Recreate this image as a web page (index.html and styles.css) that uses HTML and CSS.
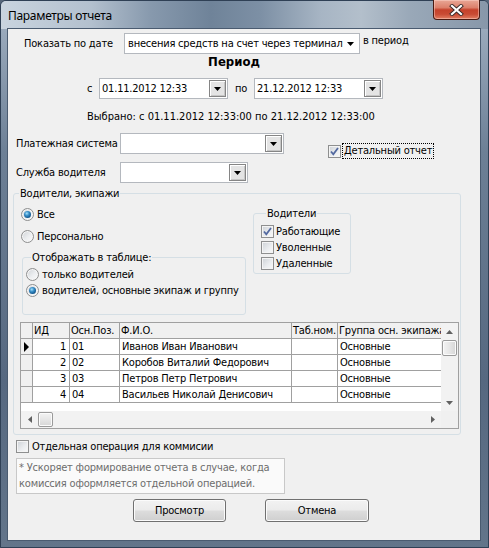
FILE: index.html
```html
<!DOCTYPE html>
<html lang="ru">
<head>
<meta charset="utf-8">
<title>Параметры отчета</title>
<link rel="stylesheet" href="styles.css">
</head>
<body>
<div class="window">
  <div class="titlebar">
    <span class="title">Параметры отчета</span>
    <div class="close-btn">
      <svg width="15" height="12" viewBox="0 0 15 12"><path d="M3 2 L12 10 M12 2 L3 10" stroke="#3a2a28" stroke-width="4" stroke-linecap="square"/><path d="M3 2 L12 10 M12 2 L3 10" stroke="#ffffff" stroke-width="2.2" stroke-linecap="square"/></svg>
    </div>
  </div>
  <div class="client">
    <div class="row r-show">
      <span class="lbl l-show">Показать по дате</span>
      <div class="combo c-show">
        <span class="ctext">внесения средств на счет через терминал</span>
        <svg class="tri" width="7" height="4" viewBox="0 0 7 4"><polygon points="0,0 7,0 3.5,4" fill="#000"/></svg>
      </div>
      <span class="lbl l-inperiod">в период</span>
    </div>
    <div class="period">Период</div>
    <div class="row r-dates">
      <span class="lbl l-from">с</span>
      <div class="field picker">
        <span class="ftext">01.11.2012 12:33</span>
        <span class="dbtn"><svg width="7" height="4" viewBox="0 0 7 4"><polygon points="0,0 7,0 3.5,4" fill="#000"/></svg></span>
      </div>
      <span class="lbl l-to">по</span>
      <div class="field picker">
        <span class="ftext">21.12.2012 12:33</span>
        <span class="dbtn"><svg width="7" height="4" viewBox="0 0 7 4"><polygon points="0,0 7,0 3.5,4" fill="#000"/></svg></span>
      </div>
    </div>
    <div class="selected">Выбрано: с 01.11.2012 12:33:00 по 21.12.2012 12:33:00</div>
    <div class="row r-pay">
      <span class="lbl l-field">Платежная система</span>
      <div class="field c-pay">
        <span class="dbtn"><svg width="7" height="4" viewBox="0 0 7 4"><polygon points="0,0 7,0 3.5,4" fill="#000"/></svg></span>
      </div>
      <div class="chk c-detail">
        <span class="box"><svg width="11" height="11" viewBox="0 0 11 11"><path d="M2 5.5 L4.3 8.3 L9 2" fill="none" stroke="#5369a0" stroke-width="1.8"/></svg></span>
        <span class="focus">Детальный отчет</span>
      </div>
    </div>
    <div class="row r-service">
      <span class="lbl l-field">Служба водителя</span>
      <div class="field c-service">
        <span class="dbtn"><svg width="7" height="4" viewBox="0 0 7 4"><polygon points="0,0 7,0 3.5,4" fill="#000"/></svg></span>
      </div>
    </div>
    <fieldset class="group g-main">
      <legend>Водители, экипажи</legend>
      <div class="g-top">
        <div class="g-left">
          <div class="opt"><span class="radio on"></span><span class="otext">Все</span></div>
          <div class="opt o-pers"><span class="radio"></span><span class="otext">Персонально</span></div>
          <fieldset class="group g-show">
            <legend>Отображать в таблице:</legend>
            <div class="opt"><span class="radio"></span><span class="otext">только водителей</span></div>
            <div class="opt o-next"><span class="radio on"></span><span class="otext">водителей, основные экипаж и группу</span></div>
          </fieldset>
        </div>
        <fieldset class="group g-drv">
          <legend>Водители</legend>
          <div class="opt"><span class="box"><svg width="11" height="11" viewBox="0 0 11 11"><path d="M2 5.5 L4.3 8.3 L9 2" fill="none" stroke="#5369a0" stroke-width="1.8"/></svg></span><span class="ctext2">Работающие</span></div>
          <div class="opt o-next"><span class="box"></span><span class="ctext2">Уволенные</span></div>
          <div class="opt o-next"><span class="box"></span><span class="ctext2">Удаленные</span></div>
        </fieldset>
      </div>
      <div class="grid">
        <div class="grid-body">
          <table class="tbl">
            <colgroup>
              <col class="w-ind"><col class="w-id"><col class="w-pos"><col class="w-fio"><col class="w-tab"><col class="w-grp">
            </colgroup>
            <thead>
              <tr><th class="ind"></th><th>ИД</th><th>Осн.Поз.</th><th>Ф.И.О.</th><th>Таб.ном.</th><th>Группа осн. экипажа</th></tr>
            </thead>
            <tbody>
              <tr><td class="ind"><span class="cur"></span></td><td class="num">1</td><td>01</td><td>Иванов Иван Иванович</td><td></td><td>Основные</td></tr>
              <tr><td class="ind"></td><td class="num">2</td><td>02</td><td>Коробов Виталий Федорович</td><td></td><td>Основные</td></tr>
              <tr><td class="ind"></td><td class="num">3</td><td>03</td><td>Петров Петр Петрович</td><td></td><td>Основные</td></tr>
              <tr><td class="ind"></td><td class="num">4</td><td>04</td><td>Васильев Николай Денисович</td><td></td><td>Основные</td></tr>
            </tbody>
          </table>
        </div>
        <div class="vscroll">
          <span class="sarrow"><svg width="7" height="4" viewBox="0 0 7 4"><polygon points="0,4 7,4 3.5,0" fill="#606060"/></svg></span>
          <span class="vthumb"></span>
          <span class="vspace"></span>
          <span class="sarrow"><svg width="7" height="4" viewBox="0 0 7 4"><polygon points="0,0 7,0 3.5,4" fill="#606060"/></svg></span>
        </div>
        <div class="hscroll">
          <span class="sarrow h"><svg width="4" height="7" viewBox="0 0 4 7"><polygon points="4,0 4,7 0,3.5" fill="#606060"/></svg></span>
          <span class="hthumb"></span>
          <span class="hspace"></span>
          <span class="sarrow h"><svg width="4" height="7" viewBox="0 0 4 7"><polygon points="0,0 0,7 4,3.5" fill="#606060"/></svg></span>
        </div>
        <div class="corner"></div>
      </div>
    </fieldset>
    <div class="chk c-sep"><span class="box"></span><span class="ctext2 sep-text">Отдельная операция для коммисии</span></div>
    <div class="note">* Ускоряет формирование отчета в случае, когда<br>комиссия оформляется отдельной операцией.</div>
    <div class="buttons">
      <button class="btn b-view">Просмотр</button>
      <button class="btn b-cancel">Отмена</button>
    </div>
  </div>
</div>
</body>
</html>
```

FILE: styles.css
```css
* { box-sizing: border-box; }
html, body { margin: 0; padding: 0; }
body {
  width: 489px;
  height: 548px;
  overflow: hidden;
  background: #56677b;
  font-family: "DejaVu Sans Condensed", "Liberation Sans", sans-serif;
  font-size: 11px;
  line-height: 13px;
  letter-spacing: -0.2px;
  color: #000;
}
.window {
  width: 489px;
  height: 548px;
  border: 1px solid #2f4055;
  border-radius: 6px 6px 0 0;
  padding: 0 8px 7px 7px;
  background: linear-gradient(180deg, #a4b3c4 0px, #6d8096 150px, #566880 380px, #63758a 548px);
  display: flex;
  flex-direction: column;
}
.titlebar {
  height: 28px;
  margin: 0 -8px 0 -7px;
  padding: 0 8px 0 7px;
  display: flex;
  justify-content: space-between;
  align-items: flex-start;
  border-radius: 5px 5px 0 0;
  background: linear-gradient(90deg, #c9d4df 0px, #b3c0ce 90px, #8799ad 150px, #6f8399 210px, #7d90a5 260px, #a7b5c4 320px, #b3bfcb 360px, #99a8b8 410px, #8797a9 489px);
}
.title {
  font-family: "Noto Sans", "Open Sans", sans-serif;
  font-size: 12px;
  line-height: 16px;
  letter-spacing: -0.3px;
  padding-top: 7px;
  color: #000;
}
.close-btn {
  width: 47px;
  height: 20px;
  margin-top: -1px;
  border: 1px solid #4a1a12;
  border-top: none;
  border-radius: 0 0 4px 4px;
  background: linear-gradient(180deg, #e9a796 0%, #dc806b 40%, #c5412b 52%, #c94b34 75%, #e27e63 100%);
  box-shadow: inset 0 0 0 1px rgba(255, 220, 210, 0.45);
  display: flex;
  align-items: center;
  justify-content: center;
}
.client {
  flex: none;
  width: 472px;
  height: 511px;
  background: #f0f0f0;
  box-shadow: 0 0 0 1px #4a5b70;
  padding-top: 4px;
}
.row { display: flex; align-items: center; height: 21px; }
.row > * { flex: none; }
.lbl { white-space: nowrap; }
.r-show { margin-left: 16px; }
.l-show { width: 100px; }
.combo {
  height: 21px;
  background: #fff;
  border: 1px solid #b4b8be;
  display: flex;
  align-items: center;
  padding: 0 5px 0 3px;
}
.c-show { width: 236px; justify-content: space-between; }
.ctext { white-space: nowrap; overflow: hidden; }
.tri { flex: none; }
.l-inperiod { align-self: flex-start; margin: 1px 0 0 3px; }
.period {
  height: 16px;
  line-height: 16px;
  font-size: 13px;
  font-weight: bold;
  letter-spacing: 0;
  text-align: center;
  padding-right: 20px;
}
.r-dates { margin: 8px 0 0 79px; }
.l-from { width: 12px; }
.l-to { width: 26px; padding-left: 7px; }
.field {
  height: 21px;
  background: #fff;
  border: 1px solid #b4b8be;
  display: flex;
  align-items: center;
  justify-content: space-between;
  padding: 0 1px 0 2px;
}
.picker { width: 129px; }
.ftext { white-space: nowrap; }
.dbtn {
  width: 17px;
  height: 17px;
  flex: none;
  margin-left: auto;
  border: 1px solid #858585;
  background: #e4e4e4;
  box-shadow: inset 1px 1px 0 #ffffff, inset -1px -1px 0 #c6c6c6;
  display: flex;
  align-items: center;
  justify-content: center;
}
.selected { margin: 11px 0 0 79px; line-height: 14px; height: 14px; letter-spacing: 0; }
.r-pay { margin: 9px 0 0 8px; }
.l-field { width: 104px; }
.c-pay { width: 164px; }
.chk { display: flex; align-items: center; }
.chk > * { flex: none; }
.c-detail { align-self: flex-start; margin: 10px 0 0 44px; height: 16px; }
.box {
  width: 13px;
  height: 13px;
  flex: none;
  border: 1px solid #8e8f8f;
  background: linear-gradient(135deg, #cdd1d6 0%, #eceef0 60%, #f8f8f8 100%);
  box-shadow: inset 0 0 0 1px #f4f4f4;
  display: flex;
  align-items: center;
  justify-content: center;
}
.focus {
  margin-left: 1px;
  height: 16px;
  line-height: 14px;
  padding: 0 1px;
  border: 1px dotted #000;
  white-space: nowrap;
}
.r-service { margin: 8px 0 0 8px; }
.c-service { width: 128px; }
.group {
  margin: 0;
  padding: 0;
  border: 1px solid #d5dfe5;
  border-radius: 3px;
  min-width: 0;
}
.group legend {
  margin-left: 5px;
  padding: 0 1px;
  line-height: 13px;
  font-size: 11px;
}
.g-main { margin: 4px 0 0 5px; width: 448px; height: 248px; }
.g-top { display: flex; align-items: flex-start; }
.g-top > * { flex: none; }
.g-left { width: 232px; margin-left: 7px; padding-top: 8px; }
.opt { display: flex; align-items: center; height: 13px; white-space: nowrap; }
.otext { margin-left: 3px; }
.ctext2 { margin-left: 2px; }
.o-pers { margin-top: 9px; }
.o-next { margin-top: 3px; }
.radio {
  width: 13px;
  height: 13px;
  flex: none;
  border-radius: 50%;
  border: 1px solid #8e8f8f;
  background: linear-gradient(135deg, #cfd2d6 0%, #eceef0 55%, #fbfbfb 100%);
  box-shadow: inset 0 0 0 1px #f6f6f6;
  display: flex;
  align-items: center;
  justify-content: center;
}
.radio.on::after {
  content: "";
  width: 7px;
  height: 7px;
  border-radius: 50%;
  background: radial-gradient(circle at 40% 35%, #a6e2fb 0%, #3a8fc8 35%, #145a91 70%, #0f3f6b 100%);
}
.g-show { margin: 8px 0 0 1px; width: 224px; height: 64px; padding: 4px 0 0 3px; }
.g-drv { margin-top: 7px; width: 98px; height: 67px; padding: 5px 0 0 7px; }
.grid {
  margin: 7px 0 0 6px;
  width: 439px;
  height: 107px;
  border: 1px solid #a0a0a0;
  background: #fff;
  display: grid;
  grid-template-columns: 1fr 17px;
  grid-template-rows: 1fr 17px;
}
.grid-body { overflow: hidden; }
.tbl {
  table-layout: fixed;
  border-collapse: separate;
  border-spacing: 0;
  width: 437px;
}
.w-ind { width: 12px; }
.w-id { width: 37px; }
.w-pos { width: 50px; }
.w-fio { width: 172px; }
.w-tab { width: 46px; }
.w-grp { width: 120px; }
.tbl th, .tbl td {
  height: 16px;
  padding: 0 2px;
  border-right: 1px solid #a0a0a0;
  border-bottom: 1px solid #a0a0a0;
  white-space: nowrap;
  overflow: hidden;
  font-weight: normal;
  text-align: left;
  line-height: 14px;
  vertical-align: middle;
}
.tbl th { background: #f0f0f0; padding: 0 1px; }
.tbl td.ind, .tbl th.ind { background: #f0f0f0; padding: 0; }
.tbl td.num { text-align: right; padding-right: 3px; }
.cur {
  display: block;
  width: 0;
  height: 0;
  margin-left: 3px;
  border-left: 5px solid #000;
  border-top: 5px solid transparent;
  border-bottom: 5px solid transparent;
}
.vscroll {
  background: #f2f2f2;
  display: flex;
  flex-direction: column;
  align-items: center;
}
.sarrow {
  width: 17px;
  height: 17px;
  flex: none;
  display: flex;
  align-items: center;
  justify-content: center;
}
.vthumb {
  width: 15px;
  height: 16px;
  flex: none;
  border: 1px solid #9a9a9a;
  border-radius: 2px;
  background: linear-gradient(90deg, #f3f3f3 0%, #e6e6e6 50%, #d6d6d6 100%);
  box-shadow: inset 0 0 0 1px #fbfbfb;
}
.vspace, .hspace { flex: 1; }
.hscroll {
  background: #f2f2f2;
  display: flex;
  align-items: center;
}
.hthumb {
  width: 15px;
  height: 15px;
  flex: none;
  border: 1px solid #9a9a9a;
  border-radius: 2px;
  background: linear-gradient(180deg, #f3f3f3 0%, #e6e6e6 50%, #d6d6d6 100%);
  box-shadow: inset 0 0 0 1px #fbfbfb;
}
.corner { background: #f0f0f0; }
.c-sep { margin: 5px 0 0 8px; height: 13px; }
.sep-text { margin-left: 3px; }
.note {
  margin: 5px 0 0 8px;
  width: 269px;
  height: 36px;
  border: 1px solid #c8c8c8;
  background: #fafafa;
  color: #6d6d6d;
  padding: 1px 0 0 2px;
  line-height: 16px;
  white-space: nowrap;
}
.buttons { display: flex; margin-top: 5px; padding-left: 125px; height: 23px; }
.btn {
  height: 23px;
  margin: 0;
  padding: 0;
  font-family: inherit;
  font-size: 11px;
  letter-spacing: -0.2px;
  color: #000;
  border: 1px solid #707070;
  border-radius: 3px;
  background: linear-gradient(180deg, #f2f2f2 0%, #ebebeb 48%, #dddddd 52%, #cfcfcf 100%);
  box-shadow: inset 0 0 0 1px #fbfbfb;
}
.b-view { width: 93px; }
.b-cancel { width: 104px; margin-left: 39px; }
```
